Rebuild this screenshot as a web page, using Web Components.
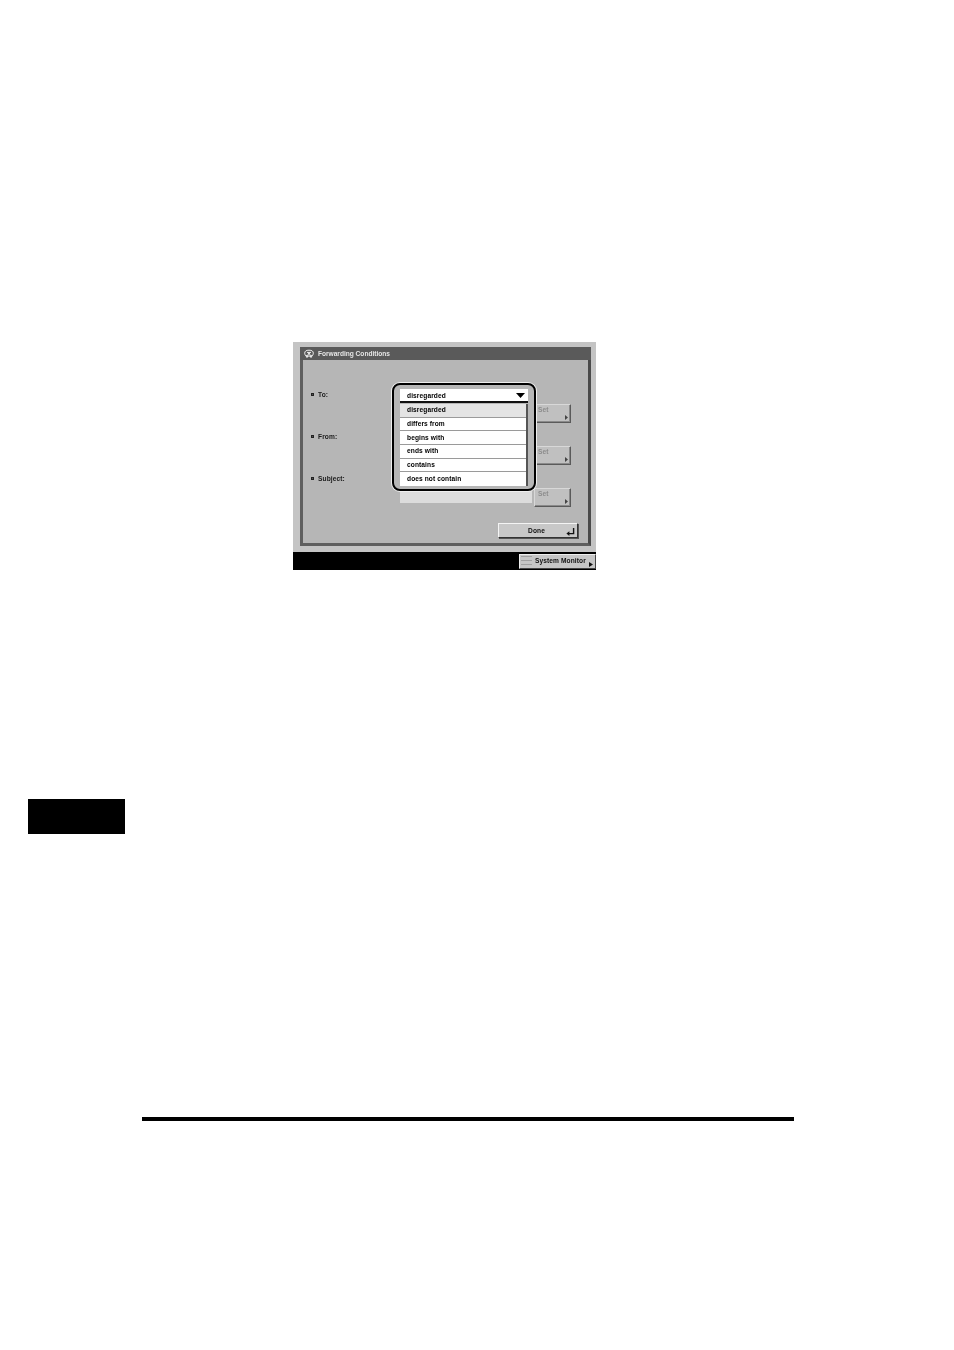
<!DOCTYPE html>
<html>
<head>
<meta charset="utf-8">
<style>
  html, body { margin: 0; padding: 0; background: #fff; }
  body { font-family: "Liberation Sans", Arial, sans-serif; }
</style>
</head>
<body>
<manual-page>
  <copier-screen>
    <forward-row label="To:"></forward-row>
    <forward-row label="From:"></forward-row>
    <forward-row label="Subject:"></forward-row>
    <condition-menu slot="menu" value="disregarded">
      <condition-option selected>disregarded</condition-option>
      <condition-option>differs from</condition-option>
      <condition-option>begins with</condition-option>
      <condition-option>ends with</condition-option>
      <condition-option>contains</condition-option>
      <condition-option>does not contain</condition-option>
    </condition-menu>
  </copier-screen>
</manual-page>

<script>
const TEXT_STYLE = `
  font: bold 6.6px "Liberation Sans", Arial, sans-serif;
  letter-spacing: 0.1px;
  white-space: nowrap;
`;

class ManualPage extends HTMLElement {
  constructor() {
    super();
    this.attachShadow({ mode: "open" });
    this.shadowRoot.innerHTML = `
      <style>
      :host { display: block; width: 954px; height: 1350px; overflow: hidden; background: #fff; }
      .top { padding: 342px 0 0 293px; height: 228px; }
      .tab { width: 97px; height: 35px; background: #000; margin: 229px 0 0 28px; }
      .rule { width: 652px; height: 4px; background: #000; margin: 283px 0 0 142px; }
      </style>
      <div class="top"><slot></slot></div>
      <div class="tab"></div>
      <div class="rule"></div>
    `;
  }
}

class CopierScreen extends HTMLElement {
  constructor() {
    super();
    this.attachShadow({ mode: "open" });
    this.shadowRoot.innerHTML = `
      <style>
      :host { display: block; position: relative; width: 303px; height: 228px; background: #b4b4b4; filter: grayscale(1) blur(0.35px); }
      .wrap { box-sizing: border-box; height: 210px; padding: 5px 5px 0 7px; background: #c4c4c4; }
      .frame { box-sizing: border-box; height: 199px; background: #b6b6b6; border: solid #5f5f5f; border-width: 0 3px 3px 3px; border-right-color: #4a4a4a; }
      .title {
        display: flex;
        align-items: center;
        gap: 4px;
        height: 13px;
        margin: 0 -3px;
        padding-left: 4px;
        background: #5a5a5a;
        color: #e6e6e6;
        ${TEXT_STYLE}
        letter-spacing: -0.01px;
      }
      .title svg { width: 10px; height: 10px; }
      .body { padding: 25px 10px 0 8px; }
      .done {
        box-sizing: border-box;
        width: 80px;
        height: 15px;
        margin: 12px 0 0 auto;
        position: relative;
        display: flex;
        align-items: center;
        justify-content: center;
        background: #c8c8c8;
        border: 1px solid;
        border-color: #f4f4f4 #333 #333 #f4f4f4;
        box-shadow: 1px 1px 0 #555;
        color: #111;
        padding: 0 3px 1px 0;
        ${TEXT_STYLE}
      }
      .done svg { position: absolute; right: 2px; bottom: 1px; width: 9px; height: 9px; }
      .bar { height: 18px; background: #000; display: flex; justify-content: flex-end; align-items: center; }
      .monitor {
        box-sizing: border-box;
        width: 77px;
        height: 15px;
        background: #c6c6c6;
        border: 1px solid;
        border-color: #eee #444 #444 #eee;
        display: flex;
        align-items: center;
        gap: 3px;
        padding: 0 0 1px 1px;
        position: relative;
        color: #111;
        ${TEXT_STYLE}
      }
      .monitor .lines { width: 11px; height: 9px; background: linear-gradient(#a0a0a0 1px, #c6c6c6 1px, #c6c6c6 4px, #a0a0a0 4px, #a0a0a0 5px, #c6c6c6 5px, #c6c6c6 8px, #a0a0a0 8px); }
      .monitor svg { position: absolute; right: 2px; bottom: 1px; width: 4px; height: 5px; }
      ::slotted([slot="menu"]) { position: absolute; left: 99px; top: 41px; }
      </style>
      <div class="wrap">
        <div class="frame">
          <div class="title">
            <svg viewBox="0 0 10 10" fill="none" stroke="#eee" stroke-width="1">
              <ellipse cx="5" cy="4.2" rx="4.3" ry="3"/>
              <path d="M3 3.4h4M5 3.4 3 8.6M5 3.4l2 5.2M1.5 6l1.5 2.6M8.5 6 7 8.6"/>
            </svg>
            Forwarding Conditions
          </div>
          <div class="body">
            <slot></slot>
            <div class="done">Done
              <svg viewBox="0 0 9 9" fill="none" stroke="#111" stroke-width="1.4"><path d="M7.6 1v5.6H2"/><path d="M3.4 4.2v4.8L.4 6.6z" fill="#111" stroke="none"/></svg>
            </div>
          </div>
        </div>
      </div>
      <div class="bar">
        <div class="monitor">
          <span class="lines"></span>System Monitor
          <svg viewBox="0 0 4 5"><path d="M0 0l4 2.5L0 5z" fill="#111"/></svg>
        </div>
      </div>
      <slot name="menu"></slot>
    `;
  }
}

class ForwardRow extends HTMLElement {
  constructor() {
    super();
    this.attachShadow({ mode: "open" });
    this.shadowRoot.innerHTML = `
      <style>
      :host { display: grid; grid-template-columns: 89px 132px 2px 37px; grid-template-rows: 19px 23px; height: 42px; color: #1a1a1a; ${TEXT_STYLE} }
      .label { grid-column: 1 / 5; display: flex; align-items: center; gap: 4px; height: 19px; }
      .label i { width: 3px; height: 3px; background: #555; border: 0.5px solid #222; box-sizing: border-box; }
      .field { grid-column: 2; height: 14px; margin-top: 1px; background: #dcdcdc; }
      .set {
        box-sizing: border-box;
        grid-column: 4;
        height: 19px;
        position: relative;
        background: #c0c0c0;
        border: 1px solid;
        border-color: #d8d8d8 #5a5a5a #5a5a5a #d8d8d8;
        box-shadow: inset -1px -1px 0 #8a8a8a;
        padding: 0 0 0 3px;
        line-height: 10px;
        color: #8c8c8c;
      }
      .set svg { position: absolute; right: 2px; bottom: 2px; width: 3px; height: 5px; }
      </style>
      <div class="label"><i></i><span></span></div>
      <div class="field"></div>
      <div class="set">Set
        <svg viewBox="0 0 3 5"><path d="M0 0l3 2.5L0 5z" fill="#444"/></svg>
      </div>
    `;
    this.shadowRoot.querySelector("span").textContent = this.getAttribute("label");
  }
}

class ConditionMenu extends HTMLElement {
  constructor() {
    super();
    this.attachShadow({ mode: "open" });
    this.shadowRoot.innerHTML = `
      <style>
      :host { display: block; box-sizing: border-box; width: 144px; height: 108px; padding: 0; }
      .ring {
        box-sizing: border-box;
        height: 100%;
        border: 2px solid #000;
        border-radius: 8px;
        box-shadow: 0 0 0 1px #eee;
        padding: 4px 6px 4px 6px;
        background: #b6b6b6;
      }
      .head {
        box-sizing: border-box;
        height: 14px;
        display: flex;
        align-items: center;
        justify-content: space-between;
        padding: 0 3px 0 7px;
        background: #fff;
        border-bottom: 2px solid #111;
        color: #000;
        ${TEXT_STYLE}
      }
      .head svg { width: 9px; height: 5px; }
      .list { margin-top: 1px; background: #fff; border-right: 2px solid #555; }
      </style>
      <div class="ring">
        <div class="head"><span></span>
          <svg viewBox="0 0 9 5"><path d="M0 0h9L4.5 5z" fill="#000"/></svg>
        </div>
        <div class="list"><slot></slot></div>
      </div>
    `;
    this.shadowRoot.querySelector("span").textContent = this.getAttribute("value");
  }
}

class ConditionOption extends HTMLElement {
  constructor() {
    super();
    this.attachShadow({ mode: "open" });
    this.shadowRoot.innerHTML = `
      <style>
      :host {
        display: flex;
        box-sizing: border-box;
        align-items: center;
        height: 13.7px;
        padding: 0 0 1px 7px;
        background: #fff;
        border-bottom: 1px solid #9a9a9a;
        color: #000;
        ${TEXT_STYLE}
      }
      :host([selected]) { background: #e4e4e4; }
      :host(:last-child) { border-bottom: 0; }
      </style>
      <slot></slot>
    `;
  }
}

customElements.define("manual-page", ManualPage);
customElements.define("copier-screen", CopierScreen);
customElements.define("forward-row", ForwardRow);
customElements.define("condition-menu", ConditionMenu);
customElements.define("condition-option", ConditionOption);
</script>
</body>
</html>
